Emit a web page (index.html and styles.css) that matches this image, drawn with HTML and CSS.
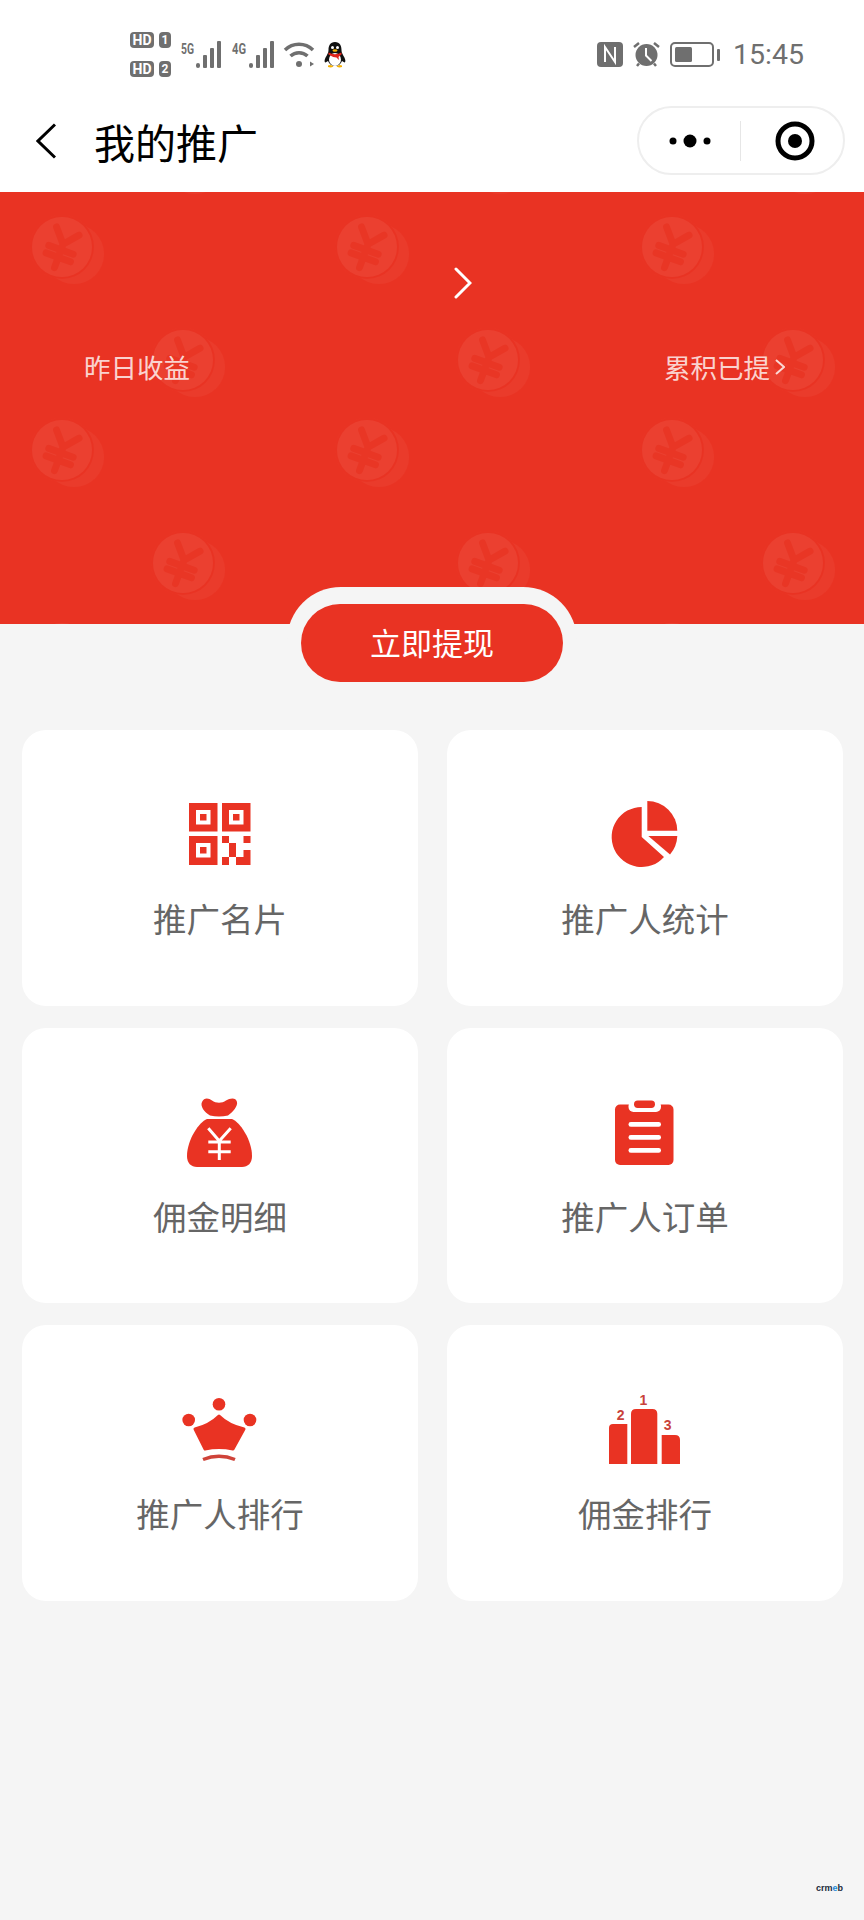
FILE: index.html
```html
<!DOCTYPE html>
<html lang="zh-CN">

<head>
    <meta charset="UTF-8">
    <meta name="viewport" content="width=device-width, initial-scale=1.0">
    <title>我的推广</title>
    <link rel="stylesheet" href="styles.css">
</head>

<body>
    <div class="status">
        <div class="hd-list">
            <div class="hd-row"><span class="chip">HD</span><span class="chip chip-num">1</span></div>
            <div class="hd-row"><span class="chip">HD</span><span class="chip chip-num">2</span></div>
        </div>
        <svg class="status-icon" width="44" height="27" viewBox="0 0 44 27">
            <text class="net-text" x="2" y="13" textLength="13" lengthAdjust="spacingAndGlyphs">5G</text>
            <rect x="17" y="22" width="4" height="5" rx="2" />
            <rect x="24" y="14" width="4" height="13" rx="1" />
            <rect x="31" y="7" width="4" height="20" rx="1" />
            <rect x="38" y="0" width="4" height="27" rx="1" />
        </svg>
        <svg class="status-icon" width="45" height="27" viewBox="0 0 45 27">
            <text class="net-text" x="1" y="13" textLength="14" lengthAdjust="spacingAndGlyphs">4G</text>
            <rect x="18" y="22" width="4" height="5" rx="2" />
            <rect x="25" y="14" width="4" height="13" rx="1" />
            <rect x="32" y="7" width="4" height="20" rx="1" />
            <rect x="39" y="0" width="4" height="27" rx="1" />
        </svg>
        <svg class="status-icon" width="32" height="27" viewBox="0 0 32 27">
            <path class="wifi-arc" d="M1 9A20 20 0 0 1 29 9" />
            <path class="wifi-arc" d="M6.5 15A12.5 12.5 0 0 1 23.500 15" />
            <circle cx="15" cy="23" r="3" />
            <path d="M26 20.500l4 2.500-4 2.500z" />
        </svg>
        <svg width="22" height="26" viewBox="0 0 22 26">
            <path d="M11 0C6 0 4.500 4 4.500 8 4.500 10 4 11 2.500 14 .5 17 0 20 1.500 20.500L4 19C5 22 8 24 11 24S17 22 18 19L20.500 20.500C22 20 21.500 17 19.500 14 18 11 17.500 10 17.500 8 17.500 4 16 0 11 0Z" fill="#111" />
            <ellipse cx="11" cy="17.500" rx="6" ry="6.500" fill="#fff" />
            <circle cx="8.500" cy="5.500" r="1.500" fill="#fff" />
            <circle cx="13.500" cy="5.500" r="1.500" fill="#fff" />
            <ellipse cx="11" cy="8.500" rx="2.500" ry="1.200" fill="#f5b000" />
            <path d="M4.500 10.500Q11 14 17.500 10.500V12.500Q14.500 14.500 14.500 15L15 18 12.500 15.500Q8 15 4.500 12.500Z" fill="#e0241c" />
            <path d="M4 23.500Q7 22 9.500 24.500 7 26 4 25ZM18 23.500Q15 22 12.500 24.500 15 26 18 25Z" fill="#f5b000" />
        </svg>

        <div class="status-right">
            <svg class="status-icon" width="26" height="25" viewBox="0 0 26 25">
                <rect width="26" height="25" rx="4" />
                <path class="nfc-line" d="M8 20V5L18 20V5" />
            </svg>
            <svg class="status-icon" width="29" height="27" viewBox="0 0 29 27">
                <circle cx="14.500" cy="14" r="11" />
                <path class="alarm-hand" d="M14 7V14.500L19.500 20" />
                <path class="alarm-bell" d="M2 6L7 2M27 6L22 2M5 25L7 22.500M24 25L22 22.500" />
            </svg>
            <svg class="status-icon" width="50" height="25" viewBox="0 0 50 25">
                <rect class="battery-box" x="1" y="1" width="42" height="23" rx="4" />
                <rect x="5" y="5" width="17" height="15" rx="1.500" />
                <rect x="47" y="7" width="3" height="12" rx="1" />
            </svg>
            <span class="time">15:45</span>
        </div>
    </div>

    <div class="nav">
        <svg class="nav-back" width="20" height="36" viewBox="0 0 20 36">
            <path d="M19 1.500L2 18L19 34.500" />
        </svg>
        <h1 class="nav-title">我的推广</h1>
        <div class="capsule">
            <div class="capsule-more">
                <svg width="42" height="14" viewBox="0 0 42 14">
                    <circle cx="4" cy="7" r="3.500" />
                    <circle cx="21" cy="7" r="6.500" />
                    <circle cx="38" cy="7" r="3.500" />
                </svg>
            </div>
            <div class="capsule-target">
                <svg width="40" height="40" viewBox="0 0 40 40">
                    <circle class="target-ring" cx="20" cy="20" r="17" />
                    <circle cx="20" cy="20" r="7" />
                </svg>
            </div>
        </div>
    </div>

    <div class="hero">
        <svg class="hero-bg" width="100%" height="100%">
            <defs>
                <pattern id="coins" x="0" y="20" width="305" height="203" patternUnits="userSpaceOnUse">
                    <g id="coin" transform="translate(62 35)">
                        <circle cx="12" cy="7" r="30" fill="#ea3b2b" />
                        <circle r="32" fill="#e93323" />
                        <circle r="30" fill="#eb4030" />
                        <g class="coin-yen" transform="rotate(20)">
                            <path d="M-12 -17L0 -3L12 -17M-13 3H13M-13 11H13M0 -3V22" />
                        </g>
                    </g>
                    <use href="#coin" x="121" y="113" />
                </pattern>
            </defs>
            <rect width="100%" height="100%" fill="url(#coins)" />
        </svg>
        <svg class="hero-arrow" width="18" height="32" viewBox="0 0 18 32">
            <path d="M2 2L16 16L2 30" />
        </svg>
        <div class="hero-row">
            <span>昨日收益</span>
            <span class="hero-link">累积已提
                <svg width="10" height="18" viewBox="0 0 10 18">
                    <path d="M1 2L9 9L1 16" />
                </svg>
            </span>
        </div>
    </div>

    <div class="withdraw">
        <div class="withdraw-btn">立即提现</div>
    </div>

    <div class="menu">
        <div class="menu-card">
            <svg class="menu-icon" width="80" height="70" viewBox="0 0 80 70">
                <rect x="9" y="3" width="28.500" height="28.500" />
                <rect class="cut" x="16" y="10" width="14.500" height="14.500" />
                <rect x="20" y="14" width="6.500" height="6.500" />
                <rect x="42" y="3" width="28.500" height="28.500" />
                <rect class="cut" x="49" y="10" width="14.500" height="14.500" />
                <rect x="53" y="14" width="6.500" height="6.500" />
                <rect x="9" y="36" width="28.500" height="29" />
                <rect class="cut" x="16" y="43" width="14.500" height="14.500" />
                <rect x="20" y="47" width="6.500" height="6.500" />
                <rect x="42" y="36" width="7" height="7" />
                <rect x="63.500" y="36" width="7" height="7" />
                <rect x="49" y="43" width="7" height="14" />
                <rect x="42" y="57" width="7" height="8" />
                <rect x="56" y="57" width="14.500" height="8" />
                <rect x="63.500" y="50" width="7" height="7" />
            </svg>
            <div class="menu-label">推广名片</div>
        </div>
        <div class="menu-card">
            <svg class="menu-icon" width="80" height="70" viewBox="0 0 80 70">
                <path d="M36.700 7A30 30 0 1 0 59 57L36.700 37Z" />
                <path d="M42.300 30.700V1A30 30 0 0 1 72.300 30.700Z" />
                <path d="M43.300 36H72.300A30 30 0 0 1 65 54.500Z" />
            </svg>
            <div class="menu-label">推广人统计</div>
        </div>
        <div class="menu-card">
            <svg class="menu-icon" width="80" height="70" viewBox="0 0 80 70">
                <path d="M30 17.500C24 14 20 8 22 4C24 -1 29 0 32 2.500C36 5.500 42 5.500 46 2.500C50 0 56 -1 57 4C58 8 53 14 48 17.500Q39 19.500 30 17.500Z" />
                <path d="M27 21H52C60 24 72 42 72 58C72 65 68 69 62 69H17C11 69 7 65 7 58C7 42 19 24 27 21Z" />
                <path class="cut-line" d="M28.300 30.300L39.300 43L50.700 30.300M28.300 44H50.700M28.300 53.700H50.700M39.300 43V62" />
            </svg>
            <div class="menu-label">佣金明细</div>
        </div>
        <div class="menu-card">
            <svg class="menu-icon" width="80" height="70" viewBox="0 0 80 70">
                <rect x="10" y="6.500" width="58.500" height="60.500" rx="5" />
                <rect class="cut" x="23.500" y="3" width="32.500" height="11" rx="5" />
                <rect x="29" y="2.500" width="21" height="7.500" rx="3.700" />
                <rect class="cut" x="23.500" y="24" width="32.500" height="4.700" rx="2.300" />
                <rect class="cut" x="23.500" y="37" width="32.500" height="4.700" rx="2.300" />
                <rect class="cut" x="23.500" y="50" width="32.500" height="4.700" rx="2.300" />
            </svg>
            <div class="menu-label">推广人订单</div>
        </div>
        <div class="menu-card">
            <svg class="menu-icon" width="80" height="70" viewBox="0 0 80 70">
                <circle cx="39" cy="9.300" r="6.300" />
                <circle cx="8.700" cy="25" r="6.300" />
                <circle cx="70" cy="25" r="6.300" />
                <path class="crown" d="M39 21Q48 30 64 34L53 54Q39 51 25 54L15 34Q30 30 39 21Z" />
                <path class="crown-line" d="M23 64.500Q39 58 55 64.500" />
            </svg>
            <div class="menu-label">推广人排行</div>
        </div>
        <div class="menu-card">
            <svg class="menu-icon" width="80" height="70" viewBox="0 0 80 70">
                <path d="M4 69V33Q4 29 8 29H22.300V69Z" />
                <path d="M26 69V19Q26 14 31 14H47.300Q52.300 14 52.300 19V69Z" />
                <path d="M56.700 69V40H70Q75 40 75 45V69Z" />
                <text class="rank" x="38.300" y="10">1</text>
                <text class="rank" x="15.700" y="25">2</text>
                <text class="rank" x="62.700" y="35">3</text>
            </svg>
            <div class="menu-label">佣金排行</div>
        </div>
    </div>

    <div class="mark">crm<span class="mark-e">e</span>b</div>
</body>

</html>
```

FILE: styles.css
```css
* {
    box-sizing: border-box;
}

html,
body {
    margin: 0;
    padding: 0;
}

body {
    position: relative;
    height: 1920px;
    overflow: hidden;
    font-family: "Noto Sans CJK SC", "Noto Sans", sans-serif;
    background-color: #f5f5f5;
}

/* status bar */
.status {
    display: flex;
    align-items: center;
    gap: 8px;
    height: 89px;
    padding: 20px 60px 0 130px;
    background-color: #fff;
}

.hd-list {
    display: flex;
    flex-direction: column;
    gap: 13px;
}

.hd-row {
    display: flex;
    gap: 5px;
}

.chip {
    width: 24px;
    height: 16px;
    border-radius: 4px;
    background-color: #6f6f6f;
    color: #fff;
    font-family: "Roboto", sans-serif;
    font-size: 14px;
    font-weight: 700;
    line-height: 16px;
    text-align: center;
}

.chip-num {
    width: 12px;
    font-size: 12px;
}

.status-icon {
    overflow: visible;
    fill: #6f6f6f;
}

.net-text {
    font-family: "Roboto", sans-serif;
    font-size: 14px;
    font-weight: 700;
}

.wifi-arc {
    fill: none;
    stroke: #6f6f6f;
    stroke-width: 3.5;
}

.status-right {
    display: flex;
    align-items: center;
    gap: 9px;
    margin-left: auto;
}

.nfc-line {
    fill: none;
    stroke: #fff;
    stroke-width: 2;
}

.alarm-hand {
    fill: none;
    stroke: #fff;
    stroke-width: 2;
}

.alarm-bell {
    fill: none;
    stroke: #6f6f6f;
    stroke-width: 2.5;
}

.battery-box {
    fill: none;
    stroke: #6f6f6f;
    stroke-width: 2;
}

.time {
    margin-left: 4px;
    color: #6f6f6f;
    font-family: "Roboto", sans-serif;
    font-size: 28.5px;
    line-height: 34px;
}

/* nav */
.nav {
    display: flex;
    align-items: center;
    height: 103px;
    padding: 0 19px 0 36px;
    background-color: #fff;
}

.nav-back path {
    fill: none;
    stroke: #000;
    stroke-width: 3;
}

.nav-title {
    margin: 0 0 0 38px;
    color: #000;
    font-size: 41px;
    font-weight: 400;
    line-height: 50px;
}

.capsule {
    display: flex;
    align-items: center;
    width: 208px;
    height: 69px;
    margin-left: auto;
    border: 2px solid #eee;
    border-radius: 35px;
}

.capsule-more {
    display: flex;
    justify-content: center;
    width: 101px;
}

.capsule-target {
    display: flex;
    justify-content: center;
    flex: 1;
    height: 40px;
    padding-left: 5px;
    border-left: 1px solid #e6e6e6;
}

.target-ring {
    fill: none;
    stroke: #000;
    stroke-width: 5;
}

/* red header */
.hero {
    position: relative;
    display: flex;
    flex-direction: column;
    height: 432px;
    padding-top: 75px;
    overflow: hidden;
    background-color: #e93323;
}

.hero-bg {
    position: absolute;
    top: 0;
    left: 0;
}

.coin-yen path {
    fill: none;
    stroke: #e93625;
    stroke-width: 7;
    stroke-linecap: round;
    stroke-linejoin: round;
}

.hero-arrow {
    position: relative;
    margin-left: 454px;
}

.hero-arrow path {
    fill: none;
    stroke: #fff;
    stroke-width: 3;
    stroke-linecap: round;
}

.hero-row {
    position: relative;
    display: flex;
    justify-content: space-between;
    margin-top: 50px;
    padding: 0 79px 0 84px;
    color: rgba(255, 255, 255, 0.8);
    font-size: 26.5px;
    line-height: 36px;
}

.hero-link {
    display: flex;
    align-items: center;
    gap: 5px;
}

.hero-link path {
    fill: none;
    stroke: rgba(255, 255, 255, 0.8);
    stroke-width: 2;
}

/* withdraw button */
.withdraw {
    position: relative;
    width: 290px;
    margin: -37px auto 0;
    padding: 17px 14px 0;
    border-radius: 54px 54px 0 0;
    background-color: #f5f5f5;
}

.withdraw-btn {
    height: 78px;
    border-radius: 39px;
    background-color: #e93323;
    color: #fff;
    font-size: 31px;
    line-height: 76px;
    text-align: center;
}

/* menu */
.menu {
    display: grid;
    grid-template-columns: 396px 396px;
    gap: 22px 29px;
    margin-top: 48px;
    padding-left: 22px;
}

.menu-card {
    display: flex;
    flex-direction: column;
    align-items: center;
    height: 275.5px;
    padding-top: 70px;
    border-radius: 24px;
    background-color: #fff;
}

.menu-icon {
    flex: none;
    overflow: visible;
    fill: #e93323;
}

.menu-icon .cut {
    fill: #fff;
}

.cut-line {
    fill: none;
    stroke: #fff;
    stroke-width: 3;
}

.crown {
    stroke: #e93323;
    stroke-width: 3;
    stroke-linejoin: round;
}

.crown-line {
    fill: none;
    stroke: #cf4339;
    stroke-width: 3.5;
}

.rank {
    fill: #c9423a;
    font-family: "Liberation Sans", sans-serif;
    font-size: 14px;
    font-weight: 700;
    text-anchor: middle;
}

.menu-label {
    margin-top: 28px;
    color: #666;
    font-size: 33.5px;
    line-height: 40px;
}

/* corner watermark */
.mark {
    position: absolute;
    right: 21px;
    bottom: 26px;
    color: #1a2a3a;
    font-family: "Liberation Sans", sans-serif;
    font-size: 9px;
    font-weight: 700;
    line-height: 12px;
}

.mark-e {
    color: #1e88d8;
}
```
